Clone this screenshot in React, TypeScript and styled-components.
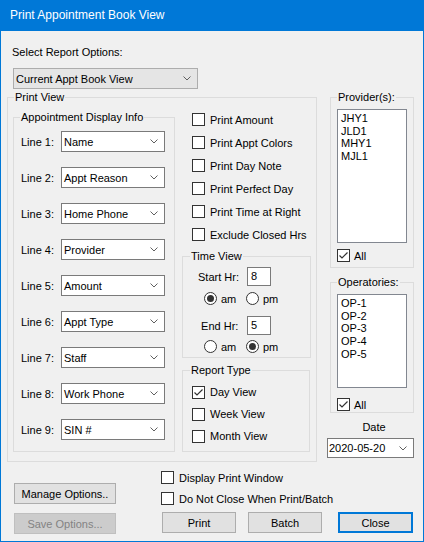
import * as React from 'react';
import styled, { createGlobalStyle } from 'styled-components';

const GlobalStyle = createGlobalStyle`
  html, body { margin: 0; padding: 0; background: #f0f0f0; }
  body {
    font-family: "Liberation Sans", Arial, sans-serif;
    font-size: 11px;
    color: #000;
  }
  * { box-sizing: border-box; }
`;

const Window = styled.div`
  width: 424px;
  height: 542px;
  display: flex;
  flex-direction: column;
  background: #f0f0f0;
  border: 1px solid #0078d7;
  border-top: none;
`;

const TitleBar = styled.div`
  height: 31px;
  flex: none;
  background: #0078d7;
  color: #fff;
  font-size: 12px;
  line-height: 31px;
  padding-left: 9px;
`;

const Body = styled.div`
  flex: 1;
  padding-left: 6px;
  display: flex;
  flex-direction: column;
`;

const TopLabel = styled.div`
  line-height: 13px;
  margin: 15px 0 0 5px;
`;

const ComboBox = styled.div<{ $w: number; $h?: number; $flat?: boolean }>`
  width: ${p => p.$w}px;
  height: ${p => p.$h ?? 21}px;
  display: flex;
  align-items: center;
  justify-content: space-between;
  padding: 0 6px 0 2px;
  background: ${p => (p.$flat ? '#e5e5e5' : '#fff')};
  border: 1px solid ${p => (p.$flat ? '#adadad' : '#7a7a7a')};
  white-space: nowrap;
`;

const ReportCombo = styled(ComboBox)`
  margin: 9px 0 0 6px;
`;

const Chevron = () => (
  <svg width="8" height="5" viewBox="0 0 8 5">
    <polyline points="0.5,0.5 4,4 7.5,0.5" fill="none" stroke="#606060" strokeWidth="1" />
  </svg>
);

const Combo = ({ w, h, flat, children }: { w: number; h?: number; flat?: boolean; children: React.ReactNode }) => (
  <ComboBox $w={w} $h={h} $flat={flat}>
    <span>{children}</span>
    <Chevron />
  </ComboBox>
);

const MainRow = styled.div`
  display: flex;
  align-items: flex-start;
  gap: 13px;
  margin-top: 2px;
`;

const Group = styled.fieldset<{ $w: number; $pl?: number }>`
  width: ${p => p.$w}px;
  margin: 0;
  min-width: 0;
  border: 1px solid #dcdcdc;
  padding: 0 0 0 ${p => p.$pl ?? 0}px;
  & > legend {
    line-height: 13px;
    padding: 0 1px;
    margin-left: ${p => 6 - (p.$pl ?? 0)}px;
  }
`;

const PrintViewGroup = styled(Group)`
  padding-right: 5px;
  padding-bottom: 9px;
`;

const PrintInner = styled.div`
  display: flex;
  align-items: flex-start;
  gap: 7px;
`;

const DisplayGroup = styled(Group)`
  margin-top: 7px;
  padding-top: 7px;
  padding-bottom: 11px;
`;

const LineGrid = styled.div`
  display: grid;
  grid-template-columns: 40px 104px;
  grid-auto-rows: 21px;
  row-gap: 15px;
  align-items: center;
`;

const MiddleCol = styled.div`
  width: 129px;
  padding-top: 4px;
  display: flex;
  flex-direction: column;
`;

const CheckRow = styled.label<{ $h: number; $pl?: number }>`
  height: ${p => p.$h}px;
  display: flex;
  align-items: center;
  gap: 5px;
  padding-left: ${p => p.$pl ?? 0}px;
  white-space: nowrap;
`;

const Box = styled.span`
  width: 13px;
  height: 13px;
  flex: none;
  border: 1px solid #333;
  background: #fff;
  display: flex;
  align-items: center;
  justify-content: center;
`;

const Check = ({ on }: { on?: boolean }) => (
  <Box>
    {on && (
      <svg width="11" height="11" viewBox="0 0 11 11">
        <polyline points="1.5,5.5 4,8 9.5,2.5" fill="none" stroke="#333" strokeWidth="1.2" />
      </svg>
    )}
  </Box>
);

const TimeGroup = styled(Group)`
  margin-top: 4px;
  padding-bottom: 4px;
  & > legend { margin-left: 7px; }
`;

const HourRow = styled.div<{ $mt: number }>`
  display: flex;
  align-items: center;
  height: 19px;
  margin-top: ${p => p.$mt}px;
  padding-left: 15px;
`;

const HourLabel = styled.span`
  width: 49px;
`;

const HourInput = styled.div`
  width: 24px;
  height: 19px;
  border: 1px solid #7a7a7a;
  background: #fff;
  padding-left: 3px;
  line-height: 17px;
`;

const RadioRow = styled.div<{ $mt: number }>`
  display: grid;
  grid-template-columns: 42px auto;
  height: 13px;
  margin-top: ${p => p.$mt}px;
  padding-left: 21px;
`;

const RadioOption = styled.label`
  display: flex;
  align-items: center;
  gap: 4px;
`;

const Circle = styled.span<{ $on?: boolean }>`
  width: 13px;
  height: 13px;
  border: 1px solid #333;
  border-radius: 50%;
  background: #fff;
  display: flex;
  align-items: center;
  justify-content: center;
  &::after {
    content: '';
    width: 7px;
    height: 7px;
    border-radius: 50%;
    background: ${p => (p.$on ? '#333' : 'transparent')};
  }
`;

const ReportGroup = styled(Group)`
  margin-top: 6px;
  padding: 4px 0 4px 0;
  & > legend { margin-left: 7px; }
`;

const RightCol = styled.div`
  width: 84px;
  display: flex;
  flex-direction: column;
`;

const ListGroup = styled(Group)<{ $pb: number; $mt?: number }>`
  margin-top: ${p => p.$mt ?? 0}px;
  padding-bottom: ${p => p.$pb}px;
`;

const ListBox = styled.div<{ $h: number }>`
  width: 70px;
  height: ${p => p.$h}px;
  margin-top: 5px;
  border: 1px solid #828790;
  background: #fff;
  padding: 2px 0 0 3px;
  line-height: 12.7px;
`;

const AllRow = styled(CheckRow)<{ $mt: number }>`
  gap: 4px;
  margin-top: ${p => p.$mt}px;
`;

const DateLabel = styled.div`
  margin-top: 8px;
  line-height: 13px;
  text-align: center;
  padding-left: 4px;
`;

const DateCombo = styled(ComboBox)`
  margin: 4px 0 0 -3px;
  padding-left: 1px;
`;

const BottomRow = styled.div`
  display: flex;
  align-items: flex-start;
`;

const LeftButtons = styled.div`
  margin: 21px 0 0 7px;
  display: flex;
  flex-direction: column;
  gap: 9px;
`;

const RightBottom = styled.div`
  margin: 5px 0 0 45px;
  display: flex;
  flex-direction: column;
`;

const ButtonRow = styled.div`
  display: flex;
  margin: 3px 0 0 1px;
`;

const Button = styled.button<{ $w: number; $ml?: number; $default?: boolean }>`
  width: ${p => p.$w}px;
  height: 21px;
  margin-left: ${p => p.$ml ?? 0}px;
  padding: 0;
  font-family: inherit;
  font-size: 11px;
  color: #000;
  background: #e1e1e1;
  border: ${p => (p.$default ? '2px solid #0078d7' : '1px solid #adadad')};
  &:disabled {
    background: #cccccc;
    border-color: #bfbfbf;
    color: #838383;
  }
`;

const lines = ['Name', 'Appt Reason', 'Home Phone', 'Provider', 'Amount', 'Appt Type', 'Staff', 'Work Phone', 'SIN #'];
const printOpts = ['Print Amount', 'Print Appt Colors', 'Print Day Note', 'Print Perfect Day', 'Print Time at Right', 'Exclude Closed Hrs'];
const providers = ['JHY1', 'JLD1', 'MHY1', 'MJL1'];
const operatories = ['OP-1', 'OP-2', 'OP-3', 'OP-4', 'OP-5'];

export default function App() {
  return (
    <>
      <GlobalStyle />
      <Window>
        <TitleBar>Print Appointment Book View</TitleBar>
        <Body>
          <TopLabel>Select Report Options:</TopLabel>
          <ReportCombo $w={185} $flat>
            <span>Current Appt Book View</span>
            <Chevron />
          </ReportCombo>

          <MainRow>
            <PrintViewGroup $w={310} $pl={5}>
              <legend>Print View</legend>
              <PrintInner>
                <DisplayGroup $w={162} $pl={7}>
                  <legend>Appointment Display Info</legend>
                  <LineGrid>
                    {lines.map((v, i) => (
                      <React.Fragment key={v}>
                        <span>Line {i + 1}:</span>
                        <Combo w={104}>{v}</Combo>
                      </React.Fragment>
                    ))}
                  </LineGrid>
                </DisplayGroup>

                <MiddleCol>
                  {printOpts.map(o => (
                    <CheckRow key={o} $h={23} $pl={10}>
                      <Check />
                      {o}
                    </CheckRow>
                  ))}
                  <TimeGroup $w={129}>
                    <legend>Time View</legend>
                    <HourRow $mt={4}>
                      <HourLabel>Start Hr:</HourLabel>
                      <HourInput>8</HourInput>
                    </HourRow>
                    <RadioRow $mt={6}>
                      <RadioOption><Circle $on />am</RadioOption>
                      <RadioOption><Circle />pm</RadioOption>
                    </RadioRow>
                    <HourRow $mt={11}>
                      <HourLabel>&nbsp;End Hr:</HourLabel>
                      <HourInput>5</HourInput>
                    </HourRow>
                    <RadioRow $mt={5}>
                      <RadioOption><Circle />am</RadioOption>
                      <RadioOption><Circle $on />pm</RadioOption>
                    </RadioRow>
                  </TimeGroup>
                  <ReportGroup $w={128}>
                    <legend>Report Type</legend>
                    <CheckRow $h={22} $pl={9}><Check on />Day View</CheckRow>
                    <CheckRow $h={22} $pl={9}><Check />Week View</CheckRow>
                    <CheckRow $h={22} $pl={9}><Check />Month View</CheckRow>
                  </ReportGroup>
                </MiddleCol>
              </PrintInner>
            </PrintViewGroup>

            <RightCol>
              <ListGroup $w={84} $pl={6} $pb={5}>
                <legend>Provider(s):</legend>
                <ListBox $h={134}>
                  {providers.map(p => <div key={p}>{p}</div>)}
                </ListBox>
                <AllRow $h={13} $mt={6}><Check on />All</AllRow>
              </ListGroup>
              <ListGroup $w={84} $pl={6} $pb={1} $mt={8}>
                <legend>Operatories:</legend>
                <ListBox $h={94}>
                  {operatories.map(p => <div key={p}>{p}</div>)}
                </ListBox>
                <AllRow $h={13} $mt={10}><Check on />All</AllRow>
              </ListGroup>
              <DateLabel>Date</DateLabel>
              <DateCombo $w={87} $h={20}>
                <span>2020-05-20</span>
                <Chevron />
              </DateCombo>
            </RightCol>
          </MainRow>

          <BottomRow>
            <LeftButtons>
              <Button $w={102}>Manage Options..</Button>
              <Button $w={102} disabled>Save Options...</Button>
            </LeftButtons>
            <RightBottom>
              <CheckRow $h={21}><Check />Display Print Window</CheckRow>
              <CheckRow $h={21}><Check />Do Not Close When Print/Batch</CheckRow>
              <ButtonRow>
                <Button $w={74}>Print</Button>
                <Button $w={74} $ml={12}>Batch</Button>
                <Button $w={75} $ml={16} $default>Close</Button>
              </ButtonRow>
            </RightBottom>
          </BottomRow>
        </Body>
      </Window>
    </>
  );
}
